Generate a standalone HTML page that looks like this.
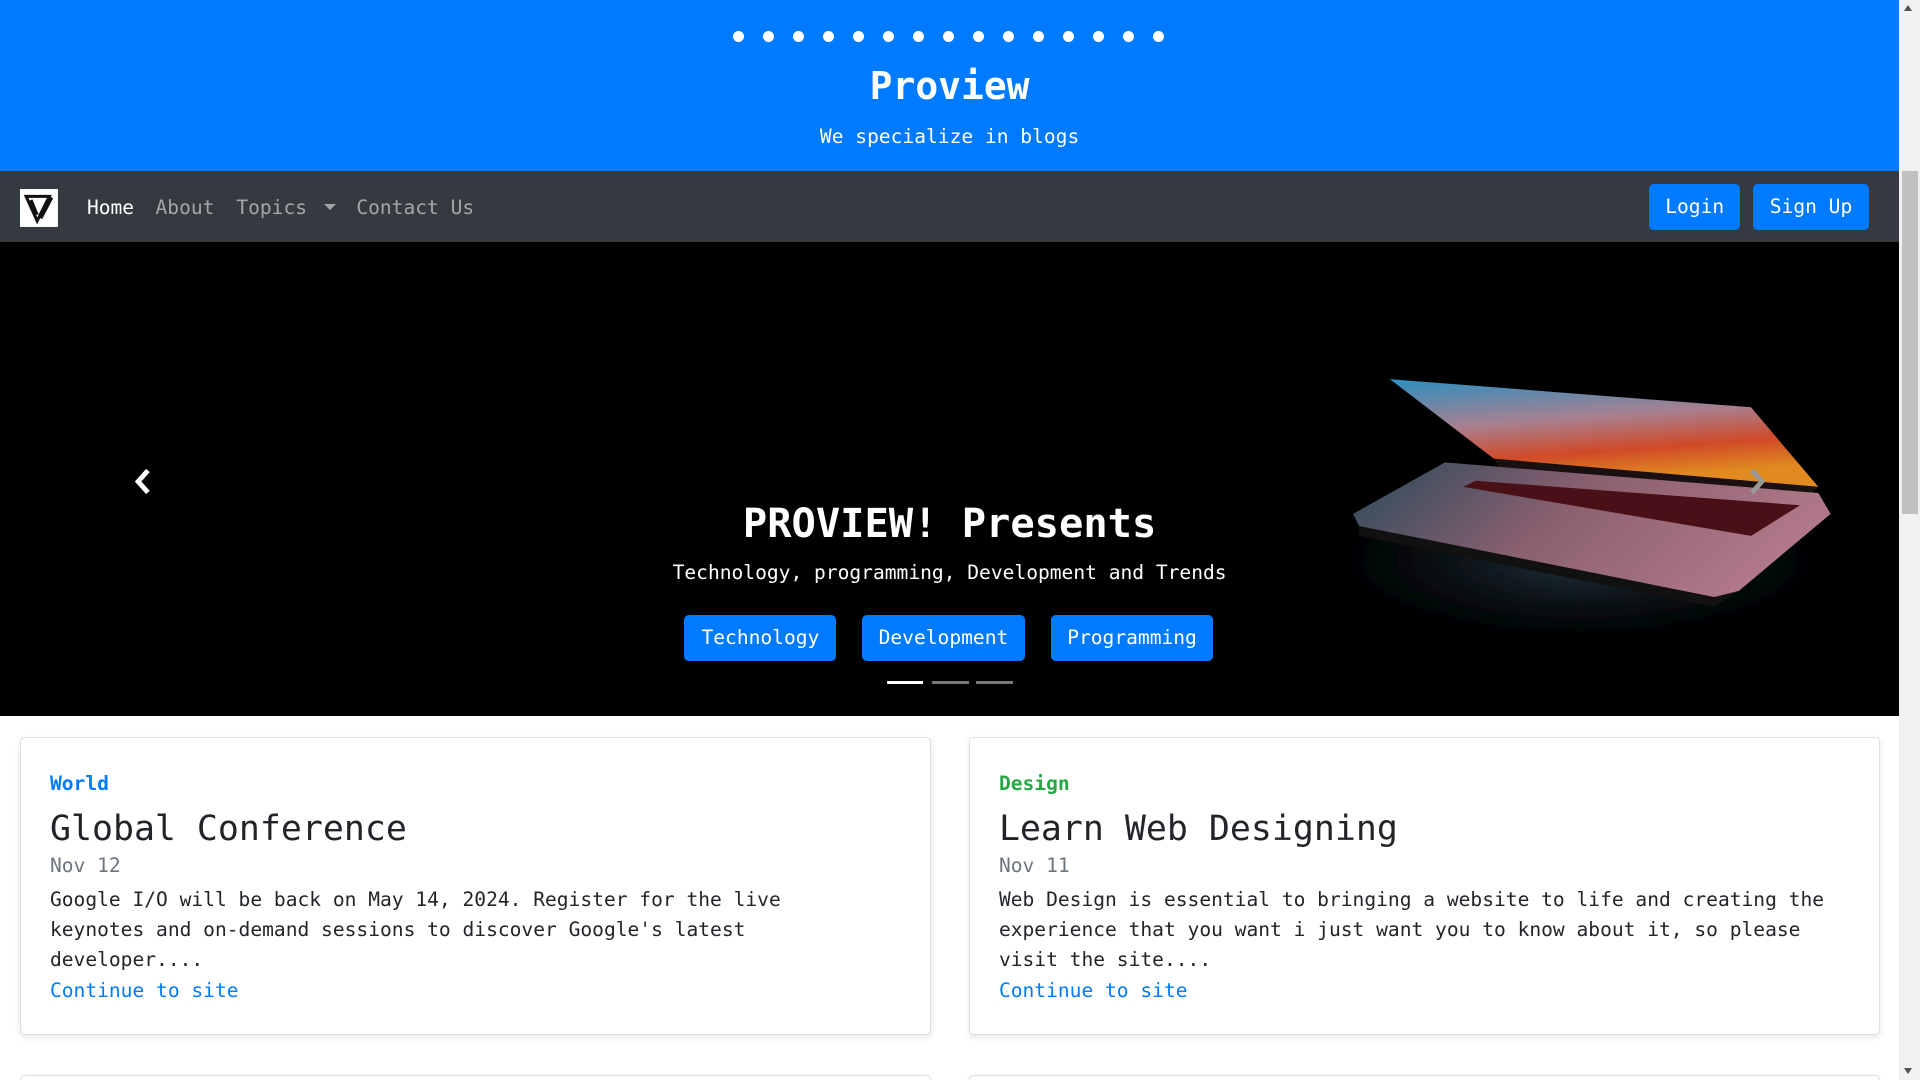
<!DOCTYPE html>
<html><head><meta charset="utf-8">
<style>
html{margin:0;padding:0;overflow:hidden;height:1080px}
body{margin:0;padding:0;width:1568px;height:882px;overflow:hidden;zoom:1.22449;background:#fff;font-family:"DejaVu Sans Mono","Liberation Mono",monospace;position:relative;color:#212529}
.abs{position:absolute}
.hdr{left:0;top:0;width:1551px;height:140px;background:#007bff;color:#fff;text-align:center}
.dots{position:absolute;top:25px;left:599px;display:flex;gap:15.5px}
.dots i{width:9px;height:9px;border-radius:50%;background:#fff;display:block}
.nav{left:0;top:140px;width:1551px;height:58px;background:#343a40}
.nav a{position:absolute;top:19px;font-size:16px;color:rgba(255,255,255,.55);text-decoration:none;line-height:20px}
.btn{position:absolute;background:#007bff;color:#fff;border-radius:4px;font-size:16px;text-align:center;line-height:38px}
.car{left:0;top:198px;width:1551px;height:387px;background:#000;overflow:hidden}
.card{position:absolute;top:602px;width:744px;height:243px;border:1px solid #dfdfdf;border-radius:4px;box-shadow:0 2px 5px rgba(0,0,0,.1);box-sizing:border-box;background:#fff}
.card .t{position:absolute;left:24px;font-size:16px;line-height:24.5px}
.sb{left:1551px;top:0;width:17px;height:882px;background:#f1f1f1}
</style></head><body>
<div class="abs hdr">
<div class="dots"><i></i><i></i><i></i><i></i><i></i><i></i><i></i><i></i><i></i><i></i><i></i><i></i><i></i><i></i><i></i></div>
<div class="abs" style="left:0;width:1551px;top:51px;font-size:31px;font-weight:bold;line-height:40px">Proview</div>
<div class="abs" style="left:0;width:1551px;top:101px;font-size:16px;line-height:22px">We specialize in blogs</div>
</div>
<div class="abs nav">
<svg class="abs" style="left:16px;top:14px" width="31" height="31" viewBox="0 0 31 31"><rect width="31" height="31" fill="#fff"/><path d="M5 6 L24 6 L14 26 Z M9 9 L14 21 M26 7 L17 24" stroke="#111" stroke-width="2.5" fill="none"/></svg>
<a style="left:71px;color:#fff;top:20px">Home</a>
<a style="left:127px;top:20px">About</a>
<a style="left:193px;top:20px">Topics</a>
<div class="abs" style="left:265px;top:27px;border-left:5px solid transparent;border-right:5px solid transparent;border-top:5px solid rgba(255,255,255,.55)"></div>
<a style="left:291px;top:20px">Contact Us</a>
<div class="btn" style="left:1347px;top:10px;width:74px">Login</div>
<div class="btn" style="left:1432px;top:10px;width:94px">Sign Up</div>
</div>
<div class="abs car">
<svg class="abs" style="left:0;top:0" width="1551" height="387">
<defs>
<linearGradient id="scr" x1="0" y1="0" x2="0.3" y2="1"><stop offset="0" stop-color="#2a90c0"/><stop offset=".45" stop-color="#a88090"/><stop offset=".75" stop-color="#d04a28"/><stop offset="1" stop-color="#e08a20"/></linearGradient>
<linearGradient id="base" x1="0" y1="0" x2="1" y2="0.3"><stop offset="0" stop-color="#2a4a5a"/><stop offset=".5" stop-color="#8a6070"/><stop offset="1" stop-color="#b07888"/></linearGradient>
<radialGradient id="gl" cx="0.5" cy="0.5" r="0.5"><stop offset="0" stop-color="#3a5a70" stop-opacity=".6"/><stop offset="1" stop-color="#000" stop-opacity="0"/></radialGradient>
<filter id="b"><feGaussianBlur stdDeviation="8"/></filter>
</defs>
<ellipse cx="1290" cy="260" rx="250" ry="80" fill="url(#gl)" filter="url(#b)"/>
<polygon points="1135,112 1430,135 1485,200 1220,177" fill="url(#scr)"/>
<polygon points="1220,177 1485,200 1480,205 1230,195" fill="#1a1010"/>
<polygon points="1105,222 1180,180 1485,205 1495,222 1420,285 1400,290 1110,232" fill="url(#base)"/>
<polygon points="1205,195 1470,215 1430,240 1195,200" fill="#4a1018"/>
<polygon points="1110,232 1400,290 1420,285 1400,298 1110,240" fill="#111"/>
</svg>
<svg class="abs" style="left:108px;top:184px" width="18" height="22"><path d="M13 2 L5 11 L13 20" stroke="#fff" stroke-width="4" fill="none"/></svg>
<svg class="abs" style="left:1426px;top:184px" width="18" height="22"><path d="M5 2 L13 11 L5 20" stroke="#999" stroke-width="4" fill="none"/></svg>
<div class="abs" style="left:0;width:1551px;top:209px;text-align:center;color:#fff;font-size:33px;font-weight:bold;line-height:42px">PROVIEW! Presents</div>
<div class="abs" style="left:0;width:1551px;top:259px;text-align:center;color:#fff;font-size:16px;line-height:22px">Technology, programming, Development and Trends</div>
<div class="btn" style="left:559px;top:304px;width:124px">Technology</div>
<div class="btn" style="left:704px;top:304px;width:133px">Development</div>
<div class="btn" style="left:858px;top:304px;width:133px">Programming</div>
<div class="abs" style="left:724px;top:358px;width:30px;height:3px;background:#fff"></div>
<div class="abs" style="left:761px;top:358px;width:30px;height:3px;background:#777"></div>
<div class="abs" style="left:797px;top:358px;width:30px;height:3px;background:#777"></div>
</div>
<div class="card" style="left:16px">
<div class="t" style="top:25px;color:#007bff;font-weight:bold">World</div>
<div class="t" style="top:56px;font-size:28.5px;line-height:36px">Global Conference</div>
<div class="t" style="top:92px;color:#6c757d">Nov 12</div>
<div class="t" style="top:120px;width:630px">Google I/O will be back on May 14, 2024. Register for the live keynotes and on-demand sessions to discover Google's latest developer....</div>
<div class="t" style="top:194px;color:#007bff">Continue to site</div>
</div>
<div class="card" style="left:791px">
<div class="t" style="top:25px;color:#28a745;font-weight:bold">Design</div>
<div class="t" style="top:56px;font-size:28.5px;line-height:36px">Learn Web Designing</div>
<div class="t" style="top:92px;color:#6c757d">Nov 11</div>
<div class="t" style="top:120px;width:700px">Web Design is essential to bringing a website to life and creating the experience that you want i just want you to know about it, so please visit the site....</div>
<div class="t" style="top:194px;color:#007bff">Continue to site</div>
</div>
<div class="card" style="left:16px;top:878px;height:10px"></div>
<div class="card" style="left:791px;top:878px;height:10px"></div>
<div class="abs sb">
<div class="abs" style="left:2px;top:140px;width:13px;height:280px;background:#c1c1c1"></div>
<div class="abs" style="left:4px;top:4px;border-left:4px solid transparent;border-right:4px solid transparent;border-bottom:5px solid #505050"></div>
<div class="abs" style="left:4px;top:872px;border-left:4px solid transparent;border-right:4px solid transparent;border-top:5px solid #505050"></div>
</div>
</body></html>
